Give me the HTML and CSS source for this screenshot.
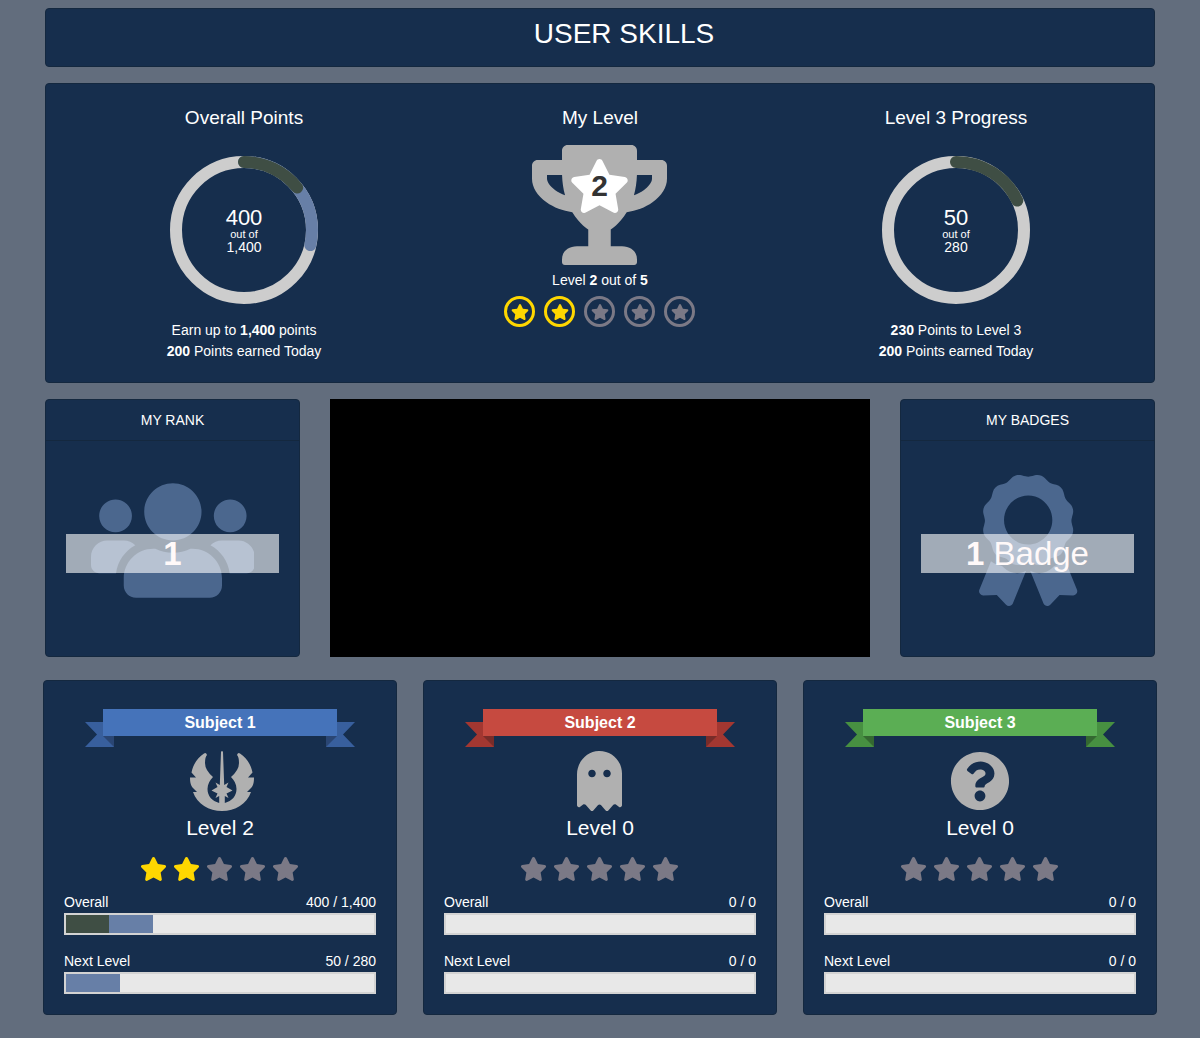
FILE: index.html
```html
<!DOCTYPE html>
<html lang="en">
<head>
<meta charset="utf-8">
<meta name="viewport" content="width=device-width, initial-scale=1">
<title>User Skills</title>
<link rel="stylesheet" href="styles.css">
</head>
<body>
<svg class="sprite" aria-hidden="true">
  <symbol id="star" viewBox="0 0 576 512"><path d="M259.3 17.8L194 150.2 47.9 171.5c-26.2 3.8-36.7 36.1-17.7 54.6l105.7 103-25 145.5c-4.5 26.3 23.2 46 46.4 33.7L288 439.6l130.7 68.7c23.2 12.2 50.9-7.4 46.4-33.7l-25-145.5 105.7-103c19-18.5 8.5-50.8-17.7-54.6L382 150.2 316.7 17.8c-11.7-23.6-45.6-23.9-57.4 0z"/></symbol>
  <symbol id="tail" viewBox="0 0 29 25"><path d="M0 0H29V25H0L12 12.5z"/><path class="fold" d="M18 14H29V25z"/></symbol>
</svg>
<main class="page">
  <header class="card title"><h1>USER SKILLS</h1></header>

  <section class="card summary">
    <div class="stat">
      <h2>Overall Points</h2>
      <div class="ring">
        <svg viewBox="0 0 150 150" aria-hidden="true">
          <circle class="track" cx="75" cy="75" r="68"/>
          <circle class="arc total" cx="75" cy="75" r="68" pathLength="1400" stroke-dasharray="400 1400"/>
          <circle class="arc today" cx="75" cy="75" r="68" pathLength="1400" stroke-dasharray="200 1400"/>
        </svg>
        <p class="ring-text"><span class="big">400</span><span class="small">out of</span><span>1,400</span></p>
      </div>
      <p>Earn up to <b>1,400</b> points</p>
      <p><b>200</b> Points earned Today</p>
    </div>
    <div class="stat">
      <h2>My Level</h2>
      <div class="trophy">
        <svg class="cup" viewBox="0 0 576 512" aria-hidden="true"><path d="M552 64H448V24c0-13.3-10.7-24-24-24H152c-13.3 0-24 10.7-24 24v40H24C10.7 64 0 74.7 0 88v56c0 35.7 22.5 72.4 61.9 100.7 31.5 22.7 69.8 37.1 110 41.7C203.3 338.5 240 360 240 360v72h-48c-35.3 0-64 20.7-64 56v12c0 6.6 5.4 12 12 12h296c6.6 0 12-5.4 12-12v-12c0-35.3-28.7-56-64-56h-48v-72s36.7-21.5 68.1-73.6c40.3-4.6 78.6-19 110-41.7 39.3-28.3 61.9-65 61.9-100.7V88c0-13.3-10.7-24-24-24zM99.3 192.8C74.9 175.2 64 155.6 64 144v-16h64.2c1 32.6 5.8 61.2 12.8 86.2-15.1-5.2-29.2-12.4-41.7-21.4zM512 144c0 16.1-17.7 36.1-35.3 48.8-12.5 9-26.7 16.2-41.8 21.4 7-25 11.8-53.6 12.8-86.2H512v16z"/></svg>
        <svg class="cup-star" aria-hidden="true"><use href="#star"/></svg>
        <strong class="cup-num">2</strong>
      </div>
      <p class="level-line">Level <b>2</b> out of <b>5</b></p>
      <div class="medals" role="img" aria-label="2 of 5">
        <span class="medal on"><svg><use href="#star"/></svg></span>
        <span class="medal on"><svg><use href="#star"/></svg></span>
        <span class="medal"><svg><use href="#star"/></svg></span>
        <span class="medal"><svg><use href="#star"/></svg></span>
        <span class="medal"><svg><use href="#star"/></svg></span>
      </div>
    </div>
    <div class="stat">
      <h2>Level 3 Progress</h2>
      <div class="ring">
        <svg viewBox="0 0 150 150" aria-hidden="true">
          <circle class="track" cx="75" cy="75" r="68"/>
          <circle class="arc today" cx="75" cy="75" r="68" pathLength="280" stroke-dasharray="50 280"/>
        </svg>
        <p class="ring-text"><span class="big">50</span><span class="small">out of</span><span>280</span></p>
      </div>
      <p><b>230</b> Points to Level 3</p>
      <p><b>200</b> Points earned Today</p>
    </div>
  </section>

  <div class="middle">
    <section class="card tile">
      <h2>MY RANK</h2>
      <div class="tile-body">
        <svg class="tile-icon" viewBox="0 0 640 512" aria-hidden="true"><path d="M96 224c35.3 0 64-28.7 64-64s-28.7-64-64-64-64 28.7-64 64 28.7 64 64 64zm448 0c35.3 0 64-28.7 64-64s-28.7-64-64-64-64 28.7-64 64 28.7 64 64 64zm32 32h-64c-17.6 0-33.5 7.1-45.1 18.6 40.3 22.1 68.9 62 75.1 109.4h66c17.7 0 32-14.3 32-32v-32c0-35.3-28.7-64-64-64zm-256 0c61.9 0 112-50.1 112-112S381.9 32 320 32 208 82.1 208 144s50.1 112 112 112zm76.8 32h-8.3c-20.8 10-43.9 16-68.5 16s-47.6-6-68.5-16h-8.3C179.6 288 128 339.6 128 403.2V432c0 26.5 21.5 48 48 48h288c26.5 0 48-21.5 48-48v-28.8c0-63.6-51.6-115.2-115.2-115.2zm-223.7-13.4C161.5 263.1 145.6 256 128 256H64c-35.3 0-64 28.7-64 64v32c0 17.7 14.3 32 32 32h65.9c6.3-47.4 34.9-87.3 75.2-109.4z"/></svg>
        <p class="tile-value"><b>1</b></p>
      </div>
    </section>
    <div class="media"></div>
    <section class="card tile">
      <h2>MY BADGES</h2>
      <div class="tile-body">
        <svg class="tile-icon" viewBox="-8 0 392 512" aria-hidden="true"><path d="M97.12 362.63c-8.69-8.69-4.16-6.24-25.12-11.85-9.51-2.55-17.87-7.45-25.43-13.32L1.2 448.7c-4.39 10.77 3.81 22.47 15.43 22.03l52.69-2.01L105.56 507c8 8.44 22.04 5.81 26.43-4.96l52.05-127.62c-10.84 6.04-22.87 9.58-35.31 9.58-19.5 0-37.82-7.59-51.61-21.37zM382.8 448.7l-45.37-111.24c-7.56 5.88-15.92 10.77-25.43 13.32-21.07 5.64-16.45 3.18-25.12 11.85-13.79 13.78-32.12 21.37-51.62 21.37-12.44 0-24.47-3.55-35.31-9.58L252 502.04c4.39 10.77 18.44 13.4 26.43 4.96l36.25-38.28 52.69 2.01c11.62.44 19.82-11.27 15.43-22.03zM263 340c15.28-15.55 17.03-14.21 38.79-20.14 13.89-3.79 24.75-14.84 28.47-28.98 7.48-28.4 5.54-24.97 25.95-45.75 10.17-10.35 14.14-25.44 10.42-39.58-7.47-28.38-7.48-24.42 0-52.83 3.72-14.14-.25-29.23-10.42-39.58-20.41-20.78-18.47-17.36-25.95-45.75-3.72-14.14-14.58-25.19-28.47-28.98-27.88-7.61-24.52-5.62-44.95-26.41-10.17-10.35-25-14.4-38.89-10.61-27.87 7.6-23.98 7.61-51.9 0-13.89-3.79-28.72.25-38.89 10.61-20.41 20.78-17.05 18.8-44.94 26.41-13.89 3.79-24.75 14.84-28.47 28.98-7.47 28.39-5.54 24.97-25.95 45.75-10.17 10.35-14.15 25.44-10.42 39.58 7.47 28.36 7.48 24.4 0 52.82-3.72 14.14.25 29.23 10.42 39.59 20.41 20.78 18.47 17.35 25.95 45.75 3.72 14.14 14.58 25.19 28.47 28.98C104.6 325.96 106.27 325 121 340c13.23 13.47 33.84 15.88 49.74 5.82a39.676 39.676 0 0 1 42.53 0c15.89 10.06 36.5 7.65 49.73-5.82zM97.66 175.96c0-53.03 42.24-96.02 94.34-96.02s94.34 42.99 94.34 96.02-42.24 96.02-94.34 96.02-94.34-42.99-94.34-96.02z"/></svg>
        <p class="tile-value"><b>1</b> Badge</p>
      </div>
    </section>
  </div>

  <div class="subjects">
    <section class="card subject blue">
      <div class="ribbon"><svg class="tail left"><use href="#tail"/></svg><svg class="tail right"><use href="#tail"/></svg><h2>Subject 1</h2></div>
      <svg class="subject-icon" viewBox="-4 0 68 60" aria-hidden="true"><path d="M31 1Q32 -1 33 1L34.2 34 38.500 31.500 36.500 36 42.500 39.500 36.500 42.500 38.500 47 34.800 45V52C42 50 46.500 45 46.500 38 46.500 33 44 29 41 26Q49 19 49 12 49 6 47 4Q48 1 50 2.500C57 7 61 14 62.500 21.500L58 26.500H64C64 32 63 35 61 37L57 41H61C57 53 45 60 32 60S7 53 3 41H7L3 37C1 35 0 32 0 26.500H6L1.500 21.500C3 14 7 7 14 2.500Q16 1 17 4 15 6 15 12 15 19 23 26C20 29 17.500 33 17.500 38 17.500 45 22 50 29.200 52V45L25.500 47 27.500 42.500 21.500 39.500 27.500 36 25.500 31.500 29.800 34z"/></svg>
      <h3>Level 2</h3>
      <div class="stars" role="img" aria-label="2 of 5 stars"><svg class="on"><use href="#star"/></svg><svg class="on"><use href="#star"/></svg><svg><use href="#star"/></svg><svg><use href="#star"/></svg><svg><use href="#star"/></svg></div>
      <div class="meter"><div class="meter-label"><span>Overall</span><span>400 / 1,400</span></div><div class="bar"><i class="today" style="width:14%"></i><i class="total" style="width:14.3%"></i></div></div>
      <div class="meter"><div class="meter-label"><span>Next Level</span><span>50 / 280</span></div><div class="bar"><i class="total" style="width:17.6%"></i></div></div>
    </section>
    <section class="card subject red">
      <div class="ribbon"><svg class="tail left"><use href="#tail"/></svg><svg class="tail right"><use href="#tail"/></svg><h2>Subject 2</h2></div>
      <svg class="subject-icon" viewBox="0 0 394 512" aria-hidden="true"><path d="M186.1.09C81.01 3.24 0 94.92 0 200.05v263.92c0 14.26 17.23 21.39 27.31 11.31l24.92-18.53c6.66-4.95 16-3.99 21.51 2.21l42.95 48.35c6.25 6.25 16.38 6.25 22.63 0l40.72-45.85c6.37-7.17 17.56-7.17 23.92 0l40.72 45.85c6.25 6.25 16.38 6.25 22.63 0l42.95-48.35c5.51-6.2 14.85-7.17 21.51-2.21l24.92 18.53c10.08 10.08 27.31 2.94 27.31-11.31V192C384 84 294.83-3.17 186.1.09zM128 224c-17.67 0-32-14.33-32-32s14.33-32 32-32 32 14.33 32 32-14.33 32-32 32zm128 0c-17.67 0-32-14.33-32-32s14.33-32 32-32 32 14.33 32 32-14.33 32-32 32z"/></svg>
      <h3>Level 0</h3>
      <div class="stars" role="img" aria-label="0 of 5 stars"><svg><use href="#star"/></svg><svg><use href="#star"/></svg><svg><use href="#star"/></svg><svg><use href="#star"/></svg><svg><use href="#star"/></svg></div>
      <div class="meter"><div class="meter-label"><span>Overall</span><span>0 / 0</span></div><div class="bar"></div></div>
      <div class="meter"><div class="meter-label"><span>Next Level</span><span>0 / 0</span></div><div class="bar"></div></div>
    </section>
    <section class="card subject green">
      <div class="ribbon"><svg class="tail left"><use href="#tail"/></svg><svg class="tail right"><use href="#tail"/></svg><h2>Subject 3</h2></div>
      <svg class="subject-icon" viewBox="0 0 512 512" aria-hidden="true"><path d="M504 256c0 136.997-111.043 248-248 248S8 392.997 8 256C8 119.083 119.043 8 256 8s248 111.083 248 248zM262.655 90c-54.497 0-89.255 22.957-116.549 63.758-3.536 5.286-2.353 12.415 2.715 16.258l34.699 26.31c5.205 3.947 12.621 3.008 16.665-2.122 17.864-22.658 30.113-35.797 57.303-35.797 20.429 0 45.698 13.148 45.698 32.958 0 14.976-12.363 22.667-32.534 33.976C247.128 238.528 216 254.941 216 296v4c0 6.627 5.373 12 12 12h56c6.627 0 12-5.373 12-12v-1.333c0-28.462 83.186-29.647 83.186-106.667 0-58.002-60.165-102-116.531-102zM256 338c-25.365 0-46 20.635-46 46 0 25.364 20.635 46 46 46s46-20.636 46-46c0-25.365-20.635-46-46-46z"/></svg>
      <h3>Level 0</h3>
      <div class="stars" role="img" aria-label="0 of 5 stars"><svg><use href="#star"/></svg><svg><use href="#star"/></svg><svg><use href="#star"/></svg><svg><use href="#star"/></svg><svg><use href="#star"/></svg></div>
      <div class="meter"><div class="meter-label"><span>Overall</span><span>0 / 0</span></div><div class="bar"></div></div>
      <div class="meter"><div class="meter-label"><span>Next Level</span><span>0 / 0</span></div><div class="bar"></div></div>
    </section>
  </div>
</main>
</body>
</html>
```
FILE: styles.css
```css
* { box-sizing: border-box; }
body {
  margin: 0;
  background: #626d7d;
  color: #fff;
  font: 14px/21px "Liberation Sans", Arial, sans-serif;
}
h1, h2, h3, p { margin: 0; font-weight: 400; }
svg { display: block; fill: currentColor; }
.sprite { position: absolute; width: 0; height: 0; }
.page { max-width: 1140px; margin: 0 auto; padding: 8px 15px 23px; }
.card {
  background: #162e4d;
  border: 1px solid #14283f;
  border-radius: 4px;
}
.title { padding: 8px 0 16px 48px; text-align: center; }
.title h1 { font-size: 28px; line-height: 33px; }

.summary {
  display: grid;
  grid-template-columns: repeat(3, 1fr);
  margin-top: 16px;
  padding: 20px;
  text-align: center;
}
.summary h2 { font-size: 19px; line-height: 28px; }
.ring { position: relative; width: 150px; margin: 23px auto 15px; }
.ring circle { fill: none; stroke-width: 12px; }
.ring .track { stroke: #cdcdcd; }
.arc { stroke-linecap: round; transform: rotate(-90deg); transform-origin: center; }
.arc.total { stroke: #677fa7; }
.arc.today { stroke: #3f4e44; }
.ring-text {
  position: absolute;
  inset: 0;
  display: flex;
  flex-direction: column;
  align-items: center;
  justify-content: center;
  line-height: 14px;
}
.ring-text .big { font-size: 22px; line-height: 22px; }
.ring-text .small { font-size: 11px; line-height: 11px; }
.trophy { position: relative; width: 136px; margin: 13px auto 5px; color: #b0b0b0; }
.cup { width: 135px; height: 120px; }
.cup-star { position: absolute; top: 14px; left: 37px; width: 61px; height: 54px; color: #fff; }
.cup-num { position: absolute; top: 24px; left: 0; right: 1px; color: #333; font-size: 30px; line-height: 34px; }
.medals { display: flex; justify-content: center; gap: 9px; margin-top: 5px; padding-right: 1px; }
.medal {
  display: grid;
  place-items: center;
  width: 31px;
  height: 31px;
  border: 3px solid;
  border-radius: 50%;
  color: #7b7986;
}
.medal svg { width: 18px; height: 16px; }
.medal.on, .stars .on { color: gold; }

.middle {
  display: grid;
  grid-template-columns: 255fr 540fr 255fr;
  gap: 30px;
  margin-top: 16px;
}
.media { background: #000; }
.tile { text-align: center; }
.tile h2 { padding: 10px; border-bottom: 1px solid #14283f; font-size: 14px; line-height: 20px; }
.tile-body { position: relative; padding: 34px 20px 50px; }
.tile-icon { height: 131px; margin: 0 auto; color: #4b678e; }
.tile-value {
  position: absolute;
  top: 93px;
  left: 20px;
  right: 20px;
  background: rgba(255, 255, 255, .6);
  color: #fff9f9;
  font-size: 33px;
  line-height: 39px;
}

.subjects {
  display: grid;
  grid-template-columns: repeat(3, 1fr);
  gap: 26px;
  margin: 23px -2px 0;
}
.subject { padding: 28px 20px 20px; text-align: center; }
.ribbon { position: relative; margin: 0 39px; }
.ribbon h2 { position: relative; font-size: 16px; font-weight: 700; line-height: 27px; background: var(--band); }
.tail { position: absolute; top: 13px; width: 29px; height: 25px; color: var(--tail); }
.tail.left { left: -18px; }
.tail.right { right: -18px; transform: scaleX(-1); }
.fold { fill: var(--fold); }
.blue { --band: #4573ba; --tail: #385f9d; --fold: #2a4674; }
.red { --band: #c64a40; --tail: #a33731; --fold: #782c29; }
.green { --band: #5bae54; --tail: #479041; --fold: #346831; }
.subject-icon { height: 60px; margin: 15px auto 0; color: #b0b0b0; }
.subject h3 { margin-top: 4px; font-size: 21px; line-height: 26px; }
.stars { display: flex; justify-content: center; gap: 6px; margin: 16px 0 11px; padding-right: 1px; color: #7b7986; }
.stars svg { width: 27px; height: 24px; }
.meter + .meter { margin-top: 16px; }
.meter-label { display: flex; justify-content: space-between; }
.bar { display: flex; height: 22px; border: 2px solid #d3d3d3; background: #e8e8e8; }
.bar .today { background: #3f4e44; }
.bar .total { background: #677fa7; }

@media (max-width: 800px) {
  .summary, .middle, .subjects { grid-template-columns: 1fr; }
  .media { min-height: 258px; }
}
```
